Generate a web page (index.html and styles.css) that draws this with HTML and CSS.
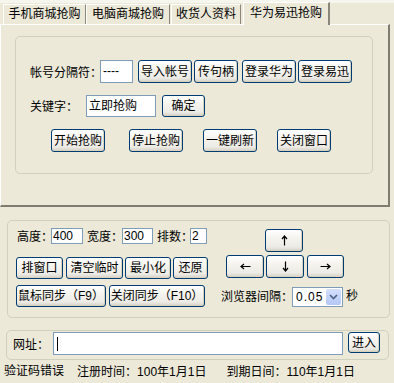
FILE: index.html
```html
<!DOCTYPE html>
<html lang="zh-CN">
<head>
	<meta charset="UTF-8">
	<title>抢购助手</title>
	<link rel="stylesheet" href="styles.css">
</head>
<body>
	<div class="tabs">
		<span class="tab t1">手机商城抢购</span>
		<span class="tab t2">电脑商城抢购</span>
		<span class="tab t3">收货人资料</span>
		<span class="tab active">华为易迅抢购</span>
	</div>
	<div class="page">
		<div class="group g1">
			<div class="row r1">
				<span class="lbl l-sep">帐号分隔符<b class="co">：</b></span>
				<span class="txt i-sep">----</span>
				<button class="btn b-imp">导入帐号</button>
				<button class="btn b-hd">传句柄</button>
				<button class="btn b-hw">登录华为</button>
				<button class="btn b-yx">登录易迅</button>
			</div>
			<div class="row r2">
				<span class="lbl l-key">关键字<b class="co">：</b></span>
				<span class="txt i-key">立即抢购</span>
				<button class="btn b-ok">确定</button>
			</div>
			<div class="row r3">
				<button class="btn b-start">开始抢购</button>
				<button class="btn b-stop">停止抢购</button>
				<button class="btn b-ref">一键刷新</button>
				<button class="btn b-close">关闭窗口</button>
			</div>
		</div>
	</div>

	<div class="group g2">
		<div class="row w1">
			<span class="lbl l-h">高度<b class="co">：</b></span>
			<span class="txt small i-h">400</span>
			<span class="lbl l-w">宽度<b class="co">：</b></span>
			<span class="txt small i-w">300</span>
			<span class="lbl l-n">排数<b class="co">：</b></span>
			<span class="txt small i-n">2</span>
			<button class="btn arrow a-up"><svg width="7" height="11" viewBox="0 0 7 11"><path d="M3.5 1 V10.5 M1 4 L3.5 1 L6 4" fill="none" stroke="#000" stroke-width="1.2"/></svg></button>
		</div>
		<div class="row w2">
			<button class="btn b-arr">排窗口</button>
			<button class="btn b-clr">清空临时</button>
			<button class="btn b-min">最小化</button>
			<button class="btn b-res">还原</button>
			<button class="btn arrow a-left"><svg width="11" height="7" viewBox="0 0 11 7"><path d="M1 3.5 H10.5 M4 1 L1 3.5 L4 6" fill="none" stroke="#000" stroke-width="1.2"/></svg></button>
			<button class="btn arrow a-down"><svg width="7" height="11" viewBox="0 0 7 11"><path d="M3.5 0.5 V10 M1 7 L3.5 10 L6 7" fill="none" stroke="#000" stroke-width="1.2"/></svg></button>
			<button class="btn arrow a-right"><svg width="11" height="7" viewBox="0 0 11 7"><path d="M0.5 3.5 H10 M7 1 L10 3.5 L7 6" fill="none" stroke="#000" stroke-width="1.2"/></svg></button>
		</div>
		<div class="row w3">
			<button class="btn b-sync">鼠标同步（F9）</button>
			<button class="btn b-unsync">关闭同步（F10）</button>
			<span class="lbl l-int">浏览器间隔<b class="co">：</b></span>
			<div class="combo">
				<span class="combo-val">0.05</span>
				<span class="combo-btn"><svg width="9" height="6" viewBox="0 0 9 6"><path d="M1 1 L4.5 4.5 L8 1" fill="none" stroke="#4d6185" stroke-width="1.6"/></svg></span>
			</div>
			<span class="lbl l-sec">秒</span>
		</div>
	</div>

	<div class="group g3">
		<span class="lbl l-url">网址<b class="co">：</b></span>
		<span class="txt i-url"><i class="caret"></i></span>
		<button class="btn b-go">进入</button>
	</div>

	<div class="status">
		<span class="s-err">验证码错误</span>
		<span class="s-reg">注册时间<b class="co">：</b>100年1月1日</span>
		<span class="s-exp">到期日间<b class="co">：</b>110年1月1日</span>
	</div>
</body>
</html>
```

FILE: styles.css
```css
html,body{
	margin: 0;
	padding: 0;
}
body{
	width: 394px;
	height: 383px;
	overflow: hidden;
	background: #ece9d8;
	color: #000;
	font: 12px/16px "Liberation Sans","Noto Sans CJK SC",sans-serif;
}
/* centred full-width colon, like the old 宋体 one */
.co{
	font-weight: normal;
	font-family: "Noto Sans CJK TC",sans-serif;
}

/* tab strip */
.tabs{
	display: flex;
	align-items: flex-end;
	height: 24px;
	padding-left: 3px;
	background: linear-gradient(#f6f5ee 0,#f6f5ee 3px,#ece9d8 3px);
}
	.tab{
		box-sizing: border-box;
		height: 20px;
		line-height: 19px;
		text-align: center;
		border-top: 1px solid #fff;
		border-left: 1px solid #fff;
		border-right: 1px solid #8a877a;
		white-space: nowrap;
	}
	.t1{ width: 83px; }
	.t2{ width: 84px; }
	.t3{ width: 70px; margin-left: 1px; }
	.tab.active{
		width: 87px;
		height: 23px;
		margin-left: 2px;
		line-height: 21px;
		position: relative;
		top: 1px;
		background: #ece9d8;
		border-right: 2px solid #8a877a;
	}

.page{
	box-sizing: border-box;
	width: 390px;
	height: 183px;
	border-top: 1px solid #fff;
	border-left: 1px solid #fff;
	border-right: 2px solid #807d70;
	border-bottom: 2px solid #807d70;
	padding: 11px 0 0 14px;
}

.group{
	box-sizing: border-box;
	border: 1px solid #d0d0bf;
	border-radius: 5px;
}
.row{
	display: flex;
	align-items: flex-start;
}
.lbl{
	white-space: nowrap;
	flex: none;
}
.txt{
	box-sizing: border-box;
	flex: none;
	background: #fff;
	border: 1px solid #7f9db9;
	padding: 0 2px;
	white-space: nowrap;
	overflow: hidden;
}
.btn{
	box-sizing: border-box;
	flex: none;
	margin: 0;
	padding: 0;
	font: inherit;
	color: #000;
	white-space: nowrap;
	border: 1px solid #003c74;
	border-radius: 3px;
	background: linear-gradient(#ffffff 0%,#f4f3ee 40%,#ecebe6 80%,#d6d0c5 100%);
	box-shadow: inset -1px -1px 0 #d8d2bd;
	overflow: visible;
}

/* first group */
.g1{
	width: 358px;
	height: 138px;
	padding-top: 23px;
}
	.r1{ height: 23px; }
	.r1 .lbl{ line-height: 23px; }
	.l-sep{ width: 70px; margin-left: 14px; }
	.i-sep{ width: 33px; height: 23px; line-height: 21px; }
	.b-imp{ width: 54px; height: 23px; margin-left: 5px; }
	.b-hd{ width: 44px; height: 23px; margin-left: 2px; }
	.b-hw{ width: 54px; height: 23px; margin-left: 4px; }
	.b-yx{ width: 54px; height: 23px; margin-left: 2px; }

	.r2{ height: 22px; margin-top: 12px; }
	.r2 .lbl{ line-height: 22px; }
	.l-key{ width: 56px; margin-left: 14px; }
	.i-key{ width: 70px; height: 22px; line-height: 20px; }
	.b-ok{ width: 43px; height: 22px; margin-left: 6px; }

	.r3{ height: 23px; margin-top: 12px; }
	.r3 .btn{ width: 54px; height: 23px; }
	.b-start{ margin-left: 35px; }
	.b-stop{ margin-left: 24px; }
	.b-ref{ margin-left: 20px; }
	.b-close{ margin-left: 20px; }

/* second group */
.g2{
	width: 383px;
	height: 98px;
	margin: 13px 0 0 7px;
	padding-top: 7px;
}
	.w1{ height: 27px; }
	.w1 .lbl{ line-height: 16px; }
	.txt.small{ height: 16px; line-height: 14px; padding: 0 1px; }
	.l-h{ width: 34px; margin-left: 9px; }
	.i-h{ width: 32px; }
	.l-w{ width: 35px; margin-left: 4px; }
	.i-w{ width: 31px; }
	.l-n{ width: 33px; margin-left: 4px; }
	.i-n{ width: 17px; }
	.arrow{
		display: flex;
		align-items: center;
		justify-content: center;
		width: 38px;
		height: 23px;
	}
	.a-up{ margin: 1px 0 0 58px; }

	.w2{ height: 24px; }
	.w2 .btn{ height: 22px; margin-top: 2px; }
	.b-arr{ width: 47px; margin-left: 8px; }
	.b-clr{ width: 57px; margin-left: 3px; }
	.b-min{ width: 46px; margin-left: 2px; }
	.b-res{ width: 35px; margin-left: 2px; }
	.w2 .arrow{ height: 23px; margin-top: 0; }
	.a-left{ margin-left: 18px; }
	.a-down{ margin-left: 2px; }
	.a-right{ width: 37px; margin-left: 3px; }

	.w3{ height: 22px; margin-top: 6px; }
	.w3 .btn{ height: 22px; }
	.w3 .lbl{ line-height: 22px; }
	.b-sync{ width: 90px; margin-left: 8px; }
	.b-unsync{ width: 96px; margin-left: 3px; }
	.l-int{ width: 71px; margin-left: 16px; }
	.combo{
		box-sizing: border-box;
		display: flex;
		width: 51px;
		height: 20px;
		margin-top: 2px;
		border: 1px solid #7f9db9;
		background: #fff;
	}
		.combo-val{
			flex: 1;
			padding-left: 3px;
			line-height: 18px;
			letter-spacing: 1px;
		}
		.combo-btn{
			display: flex;
			align-items: center;
			justify-content: center;
			width: 15px;
			margin: 1px;
			border-radius: 2px;
			background: linear-gradient(#d3dffb,#b4c8f6);
		}
	.l-sec{ margin-left: 3px; }

/* url group */
.g3{
	display: flex;
	align-items: flex-start;
	width: 383px;
	height: 30px;
	margin: 12px 0 0 6px;
	padding-top: 1px;
}
	.l-url{ width: 40px; margin-left: 6px; line-height: 23px; }
	.i-url{ width: 290px; height: 23px; }
	.caret{
		display: block;
		width: 1px;
		height: 14px;
		margin: 4px 0 0 1px;
		background: #000;
	}
	.b-go{ width: 32px; height: 21px; margin-left: 5px; }

.status{
	display: flex;
	height: 21px;
	line-height: 22px;
	padding-left: 4px;
	white-space: nowrap;
}
	.s-reg{ margin-left: 13px; }
	.s-exp{ margin-left: 20px; }
```
